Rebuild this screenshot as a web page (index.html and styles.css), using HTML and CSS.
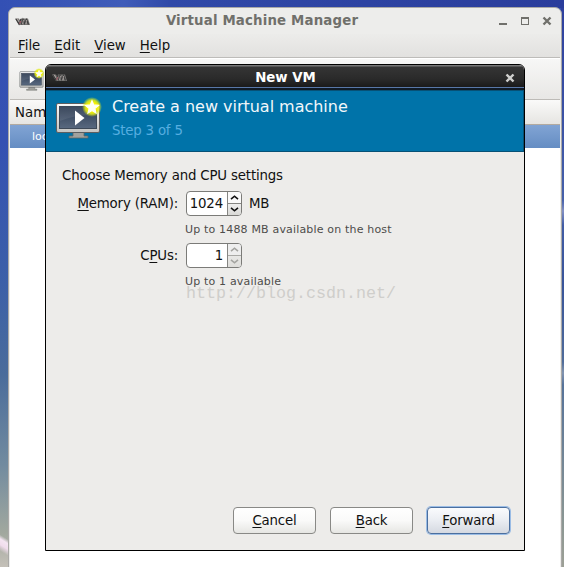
FILE: index.html
```
<!DOCTYPE html>
<html lang="en">
<head>
<meta charset="utf-8">
<title>Virtual Machine Manager</title>
<link rel="stylesheet" href="styles.css">
</head>
<body>
<svg width="0" height="0" class="defs" aria-hidden="true">
  <defs>
    <linearGradient id="screen" x1="0" y1="0" x2="0" y2="1"><stop offset="0" stop-color="#2c3a50"/><stop offset="1" stop-color="#596980"/></linearGradient>
    <linearGradient id="frame" x1="0" y1="0" x2="0" y2="1"><stop offset="0" stop-color="#fafafa"/><stop offset="1" stop-color="#c4c4c2"/></linearGradient>
    <radialGradient id="glow"><stop offset="0.45" stop-color="#fbf500"/><stop offset="0.7" stop-color="#e5ed10" stop-opacity=".85"/><stop offset="1" stop-color="#d6e820" stop-opacity="0"/></radialGradient>
    <symbol id="monitor" viewBox="0 0 48 44">
      <path d="M18 35h11v4h4v2H14v-2h4z" fill="#a2a29e" stroke="#62645f" stroke-width=".8"/>
      <rect x="1.500" y="6.500" width="43" height="29" rx="1.500" fill="url(#frame)" stroke="#5c5e60"/>
      <rect x="4.500" y="9.500" width="37" height="22" fill="url(#screen)" stroke="#3e4958"/>
      <path d="M5 10h36v8Q21 17 5 24z" fill="#fff" opacity=".08"/>
      <path d="M20 13.500l9.500 7.500-9.500 7.500z" fill="#fff"/>
      <circle cx="37" cy="10" r="10" fill="url(#glow)"/>
      <path d="M37 4l1.700 4 4.600.4-3.500 3 1.100 4.500-3.900-2.400-3.900 2.400 1.100-4.500-3.500-3 4.600-.4z" fill="#fffff3" stroke="#fffff3" stroke-width="1.300"/>
    </symbol>
    <symbol id="vm" viewBox="0 0 15 9">
      <path d="M0 1.500h4l1 2 1-2h7l2 6.500H4z" fill="#777573"/>
      <path d="M1 2l3 5 2-5M6.500 7.500l1.500-5 1.500 4 2-4 2 5" fill="none" stroke="#3f3f3f" stroke-width="1.300"/>
      <path d="M2 1.500l2.500 4M7.500 7l1-4M11 7l.5-4" fill="none" stroke="#bcb3b0" stroke-width=".8"/>
      <path d="M4.500 7l1.300-3" stroke="#a25a65"/>
    </symbol>
    <symbol id="close" viewBox="0 0 10 10"><path d="M1.500 1.500l7 7M8.500 1.500l-7 7" stroke="currentColor" stroke-width="2.400"/></symbol>
  </defs>
</svg>
<div class="window">
  <div class="titlebar">
    <svg class="vm-logo"><use href="#vm"/></svg>
    <span class="window-title">Virtual Machine Manager</span>
    <div class="controls">
      <i class="minimize"></i><i class="maximize"></i><svg class="close"><use href="#close"/></svg>
    </div>
  </div>
  <div class="menubar"><span><u>F</u>ile</span><span><u>E</u>dit</span><span><u>V</u>iew</span><span><u>H</u>elp</span></div>
  <div class="toolbar"><svg class="new-icon"><use href="#monitor"/></svg></div>
  <div class="list-head">Name</div>
  <div class="list-row">localhost (QEMU)</div>
  <div class="list"></div>
</div>

<div class="dialog">
  <div class="dialog-bar">
    <svg class="vm-logo"><use href="#vm"/></svg>
    <span class="dialog-title">New VM</span>
    <svg class="close"><use href="#close"/></svg>
  </div>
  <div class="banner">
    <svg class="banner-icon"><use href="#monitor"/></svg>
    <div class="banner-text"><div class="heading">Create a new virtual machine</div><div class="step">Step 3 of 5</div></div>
  </div>
  <div class="content">
    <div class="intro">Choose Memory and CPU settings</div>
    <div class="form">
      <label><span><u>M</u>emory (RAM):</span></label>
      <div class="field">
        <div class="spin"><span class="value">1024</span><div class="steps"><svg viewBox="0 0 9 5"><path d="M1 4.200l3.500-3 3.500 3"/></svg><svg viewBox="0 0 9 5"><path d="M1 .8l3.500 3 3.500-3"/></svg></div></div>
        <span class="unit">MB</span>
      </div>
      <div class="hint hint-memory">Up to 1488 MB available on the host</div>
      <label><span>C<u>P</u>Us:</span></label>
      <div class="field">
        <div class="spin inactive"><span class="value">1</span><div class="steps"><svg viewBox="0 0 9 5"><path d="M1 4.200l3.500-3 3.500 3"/></svg><svg viewBox="0 0 9 5"><path d="M1 .8l3.500 3 3.500-3"/></svg></div></div>
      </div>
      <div class="hint">Up to 1 available</div>
    </div>
    <div class="actions"><div class="button"><span><u>C</u>ancel</span></div><div class="button"><span><u>B</u>ack</span></div><div class="button default"><span><u>F</u>orward</span></div></div>
  </div>
  <div class="watermark">http://blog.csdn.net/</div>
</div>
</body>
</html>
```
FILE: styles.css
```
* { box-sizing: border-box; }
body {
  margin: 0;
  width: 564px;
  height: 567px;
  overflow: hidden;
  position: relative;
  padding: 7px 2px 0 8px;
  font: 13.33px/16px "DejaVu Sans", sans-serif;
  color: #111;
  background:
    linear-gradient(212deg, transparent 20%, #f4e5f2 32%, #f0dcec 48%, transparent 66%) 0 533px / 9px 30px no-repeat,
    linear-gradient(90deg, #3350b4, #3f5cb9 22%, #3049a8 30%, #2a3d9c) 0 0 / 564px 8px no-repeat,
    linear-gradient(transparent 200px, #8290c4 211px, transparent 225px 362px, #8294b0 373px, transparent 385px) 100% 0 / 3px 567px no-repeat,
    linear-gradient(#2d3f9e, #4560aa 35%, #38549a 50%, #56739a 68%, #8a9693 92%, #9da096) 100% 0 / 3px 567px no-repeat,
    linear-gradient(#3350b4, #3551b2 25%, #3c60a8 50%, #4a6c9b 66%, #728b9f 82%, #a1a89e 94%, #c4c0b8);
}
.defs { position: absolute; }
u { text-underline-offset: 2px; text-decoration-thickness: 1px; text-decoration-skip-ink: none; }

.window {
  height: 575px;
  display: flex;
  flex-direction: column;
  border: 1px solid #aaa9a7;
  border-radius: 7px 7px 0 0;
  padding: 0 1px;
  background: #ededeb;
}
.titlebar { height: 26px; display: flex; align-items: center; padding: 0 8px 0 5px; color: #70706b; }
.vm-logo { width: 15px; height: 9px; }
.window-title { flex: 1; text-align: center; font-weight: bold; letter-spacing: .16px; padding-right: 5px; }
.controls { display: flex; align-items: center; gap: 14px; }
.controls i { display: block; width: 8px; height: 8px; border: 1px solid #70706b; border-top-width: 2px; }
.controls .minimize { border-width: 0 0 2px; }
.close { width: 10px; height: 10px; }
.controls .close { margin-left: -1px; }
.menubar { height: 24px; display: flex; gap: 14px; padding: 4px 8px 2px; border-bottom: 1px solid #bdbcb9; background: linear-gradient(#ececea, #e2e1df); }
.toolbar { height: 42px; padding: 9px 9px; border-top: 1px solid #fff; border-bottom: 1px solid #bdbbb7; background: linear-gradient(#f7f7f6, #e8e7e5); }
.new-icon { width: 26px; height: 24px; display: block; }
.list-head { height: 25px; padding: 5px; border-bottom: 1px solid #b2aaa0; background: linear-gradient(#fafaf9, #e6e5e2); }
.list-row { height: 23px; padding: 4px 22px; font-size: 11px; color: #fff; background: linear-gradient(#81a4d4, #658dc3); }
.list { flex: 1; background: #fff; }

.dialog {
  position: absolute;
  left: 45px;
  top: 64px;
  width: 480px;
  height: 487px;
  display: flex;
  flex-direction: column;
  border: 1px solid #000;
  border-radius: 6px 6px 0 0;
  background: #edecea;
  overflow: hidden;
}
.dialog-bar {
  height: 25px;
  display: flex;
  align-items: center;
  padding: 0 9px 0 6px;
  color: #d0d0ce;
  background: linear-gradient(#777 0 1px, #353535 2px, #2a2a2a 14px, #1a1a1a 22px, #5877a8 22px 23px, #101a25 23px);
}
.dialog-title { flex: 1; text-align: center; color: #fff; font-weight: bold; padding-right: 1px; }
.banner { height: 62px; display: flex; padding: 6px 9px; gap: 9px; color: #f2f7fa; background: #0073a9; border: 1px solid #075176; border-width: 1px 1px 1px 0; }
.banner-icon { width: 48px; height: 44px; flex: none; }
.heading { font-size: 16px; line-height: 20px; letter-spacing: -.02px; }
.step { line-height: 18px; margin-top: 5px; color: #57aee0; letter-spacing: -.2px; }
.content { flex: 1; display: flex; flex-direction: column; padding: 16px 14px 16px 16px; letter-spacing: -.16px; }
.form { display: grid; grid-template-columns: 116px auto; column-gap: 7px; grid-template-rows: 26px 26px 26px 26px; margin-top: 7px; }
.form label { text-align: right; line-height: 26px; }
.field { display: flex; align-items: center; gap: 7px; }
.spin { width: 56px; height: 25px; margin: -1px 0 0 1px; border: 1px solid #7b7b78; border-radius: 4px; display: flex; background: #fff; overflow: hidden; }
.value { flex: 1; text-align: right; padding-right: 4px; line-height: 24px; }
.steps { width: 14px; border-left: 1px solid #858582; display: grid; grid-template-rows: 1fr 1fr; place-items: center; color: #111; background: linear-gradient(#fafafa 0 11px, #858582 11px 12px, #eee 12px, #d9d9d6); }
.steps svg { width: 9px; height: 5px; fill: none; stroke: currentColor; stroke-width: 1.6; }
.inactive .steps { color: #a4a4a0; background: linear-gradient(#eee 0 11px, #a9a9a5 11px 12px, #e8e8e6 12px, #deddda); }
.hint { grid-column: 2; font-size: 11px; line-height: 26px; color: #4d4d4b; letter-spacing: .17px; }
.actions { margin-top: auto; display: flex; justify-content: flex-end; gap: 14px; }
.button { width: 83px; height: 27px; border: 1px solid #898986; border-radius: 4px; text-align: center; line-height: 25px; background: linear-gradient(#fff, #fafaf9 50%, #e6e6e3); }
.default { border-color: #4b6f9f; box-shadow: 0 0 0 1px #9abce5; background: linear-gradient(#fafbfd, #eaedf2 50%, #d5d9e1); }
.watermark { position: absolute; left: 140px; top: 218px; font: 16.67px/22px "Liberation Mono", monospace; color: #cfcecb; white-space: nowrap; }
```
